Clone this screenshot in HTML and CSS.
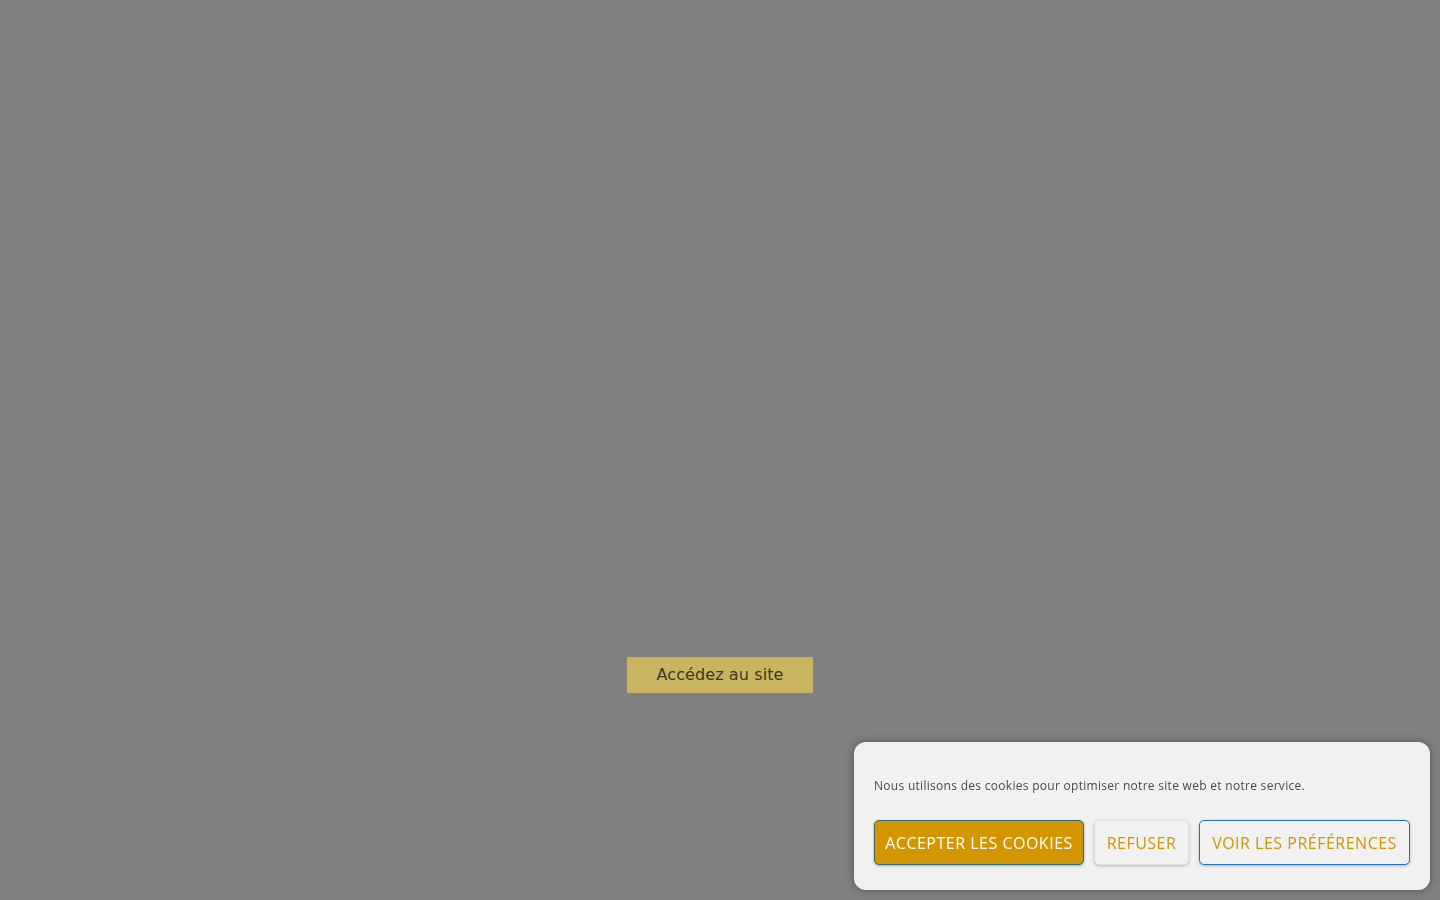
FILE: index.html
```
<!DOCTYPE html>
<html lang="fr">
<head>
<meta charset="utf-8">
<title>Accédez au site</title>
<link rel="stylesheet" href="styles.css">
</head>
<body>
<main class="page">
  <a class="enter-btn" href="#">Accédez au site</a>
</main>
<div class="cookie-banner">
  <p class="cookie-text">Nous utilisons des cookies pour optimiser notre site web et notre service.</p>
  <div class="cookie-buttons">
    <button class="cbtn cbtn-accept">Accepter les cookies</button>
    <button class="cbtn cbtn-deny">Refuser</button>
    <button class="cbtn cbtn-prefs">Voir les préférences</button>
  </div>
</div>
</body>
</html>
```
FILE: styles.css
```
html, body {
  margin: 0;
  padding: 0;
  height: 100%;
}
body {
  background: #808080;
  font-family: "DejaVu Sans", sans-serif;
  overflow: hidden;
}
.page {
  height: 900px;
  display: flex;
  justify-content: center;
  align-items: flex-start;
  padding-top: 657px;
  box-sizing: border-box;
}
.enter-btn {
  display: block;
  width: 186px;
  height: 36px;
  line-height: 35px;
  text-align: center;
  background: #c9b560;
  color: #3d3726;
  font-size: 16px;
  letter-spacing: 0.1px;
  font-weight: 400;
  text-decoration: none;
}
.cookie-banner {
  position: fixed;
  right: 10px;
  bottom: 10px;
  width: 576px;
  height: 148px;
  box-sizing: border-box;
  background: #f1f1f1;
  border-radius: 12px;
  box-shadow: 0 0 10px rgba(0,0,0,0.35);
  padding: 35px 20px 25px 20px;
  display: flex;
  flex-direction: column;
}
.cookie-text {
  margin: 0;
  font-family: "Open Sans", sans-serif;
  font-size: 12px;
  line-height: 18px;
  color: #4a4a4a;
  letter-spacing: 0.29px;
}
.cookie-buttons {
  display: flex;
  gap: 10px;
  margin-top: 25px;
}
.cbtn {
  height: 45px;
  box-sizing: border-box;
  border-radius: 5px;
  font-family: "Open Sans", sans-serif;
  font-size: 16px;
  letter-spacing: 0.5px;
  text-transform: uppercase;
  padding: 0;
  cursor: pointer;
}
.cbtn-accept {
  width: 210px;
  background: #d39600;
  color: #ffffff;
  border: 1px solid #2e6a78;
  box-shadow: 0 1px 3px rgba(0,0,0,0.3);
}
.cbtn-deny {
  width: 95px;
  background: #f1f1f1;
  color: #d39600;
  border: 1px solid #e2e2e2;
  box-shadow: 0 1px 3px rgba(0,0,0,0.25);
}
.cbtn-prefs {
  width: 211px;
  background: #f1f1f1;
  color: #d39600;
  border: 1px solid #1e73be;
  box-shadow: 0 1px 3px rgba(0,0,0,0.25);
}
```
